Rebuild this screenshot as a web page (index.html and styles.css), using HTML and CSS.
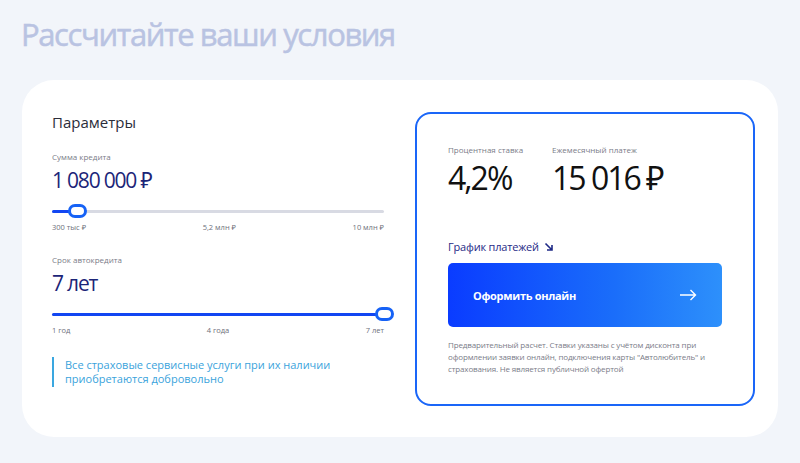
FILE: index.html
```html
<!DOCTYPE html>
<html lang="ru">
<head>
<meta charset="utf-8">
<link rel="stylesheet" href="styles.css">
</head>
<body>
<h1 class="title">Рассчитайте ваши условия</h1>
<div class="card">
  <div class="params">
    <div class="params-head">Параметры</div>
    <div class="field">
      <div class="label">Сумма кредита</div>
      <div class="value">1 080 000 ₽</div>
      <div class="slider">
        <div class="track"><div class="fill" style="width:7.5%"></div></div>
        <div class="thumb" style="left:7.5%"></div>
      </div>
      <div class="ticks"><span>300 тыс ₽</span><span>5,2 млн ₽</span><span>10 млн ₽</span></div>
    </div>
    <div class="field">
      <div class="label">Срок автокредита</div>
      <div class="value">7 лет</div>
      <div class="slider">
        <div class="track"><div class="fill" style="width:100%"></div></div>
        <div class="thumb" style="left:100%"></div>
      </div>
      <div class="ticks"><span>1 год</span><span>4 года</span><span>7 лет</span></div>
    </div>
    <div class="note">Все страховые сервисные услуги при их наличии приобретаются добровольно</div>
  </div>
  <div class="result">
    <div class="stats">
      <div class="stat stat-rate">
        <div class="stat-label">Процентная ставка</div>
        <div class="stat-value">4,2%</div>
      </div>
      <div class="stat">
        <div class="stat-label">Ежемесячный платеж</div>
        <div class="stat-value">15 016 ₽</div>
      </div>
    </div>
    <a class="schedule">График платежей
      <svg class="sched-icon" width="10" height="10" viewBox="0 0 10 10"><path d="M1.5 1.5 L8 8 M8 3 V8 H3" fill="none" stroke="#1f2a86" stroke-width="1.6"/></svg>
    </a>
    <button class="cta"><span>Оформить онлайн</span>
      <svg width="17" height="12" viewBox="0 0 17 12"><path d="M0 6 H15.5 M10.5 1 L15.5 6 L10.5 11" fill="none" stroke="#fff" stroke-width="1.4"/></svg>
    </button>
    <p class="disclaimer">Предварительный расчет. Ставки указаны с учётом дисконта при оформлении заявки онлайн, подключения карты "Автолюбитель" и страхования. Не является публичной офертой</p>
  </div>
</div>
</body>
</html>
```
FILE: styles.css
```css
* { box-sizing: border-box; }
body {
  margin: 0;
  background: #f2f5fa;
  font-family: "Open Sans", "Noto Sans", sans-serif;
  width: 800px;
  height: 463px;
  overflow: hidden;
}
.title {
  margin: 0;
  padding: 14px 0 0 21px;
  height: 80px;
  font-size: 31px;
  line-height: 40px;
  font-weight: 500;
  letter-spacing: -1.4px;
  color: #b9c3e2;
  -webkit-text-stroke: 0.5px #b9c3e2;
}
.card {
  margin-left: 22px;
  width: 756px;
  height: 357px;
  background: #fff;
  border-radius: 32px;
  display: flex;
  justify-content: space-between;
  padding: 32px 23px 31px 30px;
}
.params {
  width: 342px;
}
.params-head {
  font-size: 15px;
  line-height: 20px;
  color: #2b2d3a;
  margin-bottom: 19px;
}
.field { margin-bottom: 21px; }
.label {
  font-size: 8px;
  line-height: 12px;
  color: #7a7c88;
}
.value {
  font-size: 21px;
  line-height: 28px;
  margin-top: 3px;
  color: #1c2578;
  letter-spacing: -1.2px;
}
.slider {
  position: relative;
  width: 332px;
  height: 16px;
  margin-top: 10px;
}
.track {
  position: absolute;
  left: 0; right: 0; top: 6px;
  height: 3px;
  background: #d8dae3;
  border-radius: 2px;
}
.fill {
  height: 3px;
  background: #1246f2;
  border-radius: 2px;
}
.thumb {
  position: absolute;
  top: 0;
  width: 19px;
  height: 14px;
  margin-left: -9px;
  border: 3px solid #1662f6;
  border-radius: 7px;
  background: #fff;
}
.ticks {
  width: 332px;
  display: flex;
  justify-content: space-between;
  font-size: 7.5px;
  line-height: 12px;
  color: #6e707b;
  margin-top: 1px;
}
.note {
  margin-top: 5px;
  border-left: 2px solid #3aa7e0;
  padding-left: 11px;
  font-size: 11px;
  line-height: 14px;
  color: #3aa3dc;
  width: 300px;
  padding-top: 1px;
  padding-bottom: 1px;
}
.result {
  width: 340px;
  height: 294px;
  border: 2px solid #1a66f8;
  border-radius: 16px;
  padding: 30px 31px 0 31px;
  display: flex;
  flex-direction: column;
}
.stats { display: flex; }
.stat-rate { width: 104px; }
.stat-label {
  font-size: 8px;
  line-height: 12px;
  color: #7a7c88;
}
.stat-value {
  font-size: 32px;
  line-height: 40px;
  color: #111;
  letter-spacing: -2px;
  margin-top: 2px;
}
.schedule {
  margin-top: 41px;
  font-size: 11px;
  line-height: 16px;
  letter-spacing: -0.2px;
  color: #1f2a86;
  display: flex;
  align-items: center;
  gap: 5px;
}
.cta {
  margin-top: 8px;
  height: 64px;
  width: 274px;
  border: 0;
  border-radius: 5px;
  background: linear-gradient(90deg, #0a3cff 0%, #1a6dfa 60%, #2d90fb 100%);
  display: flex;
  align-items: center;
  justify-content: space-between;
  padding: 0 25px 0 25px;
  font-family: inherit;
  font-size: 11px;
  font-weight: 700;
  letter-spacing: -0.3px;
  color: #fff;
}
.disclaimer {
  margin: 12px 0 0 0;
  font-size: 8px;
  line-height: 12px;
  letter-spacing: -0.15px;
  color: #7a7c88;
}
```
